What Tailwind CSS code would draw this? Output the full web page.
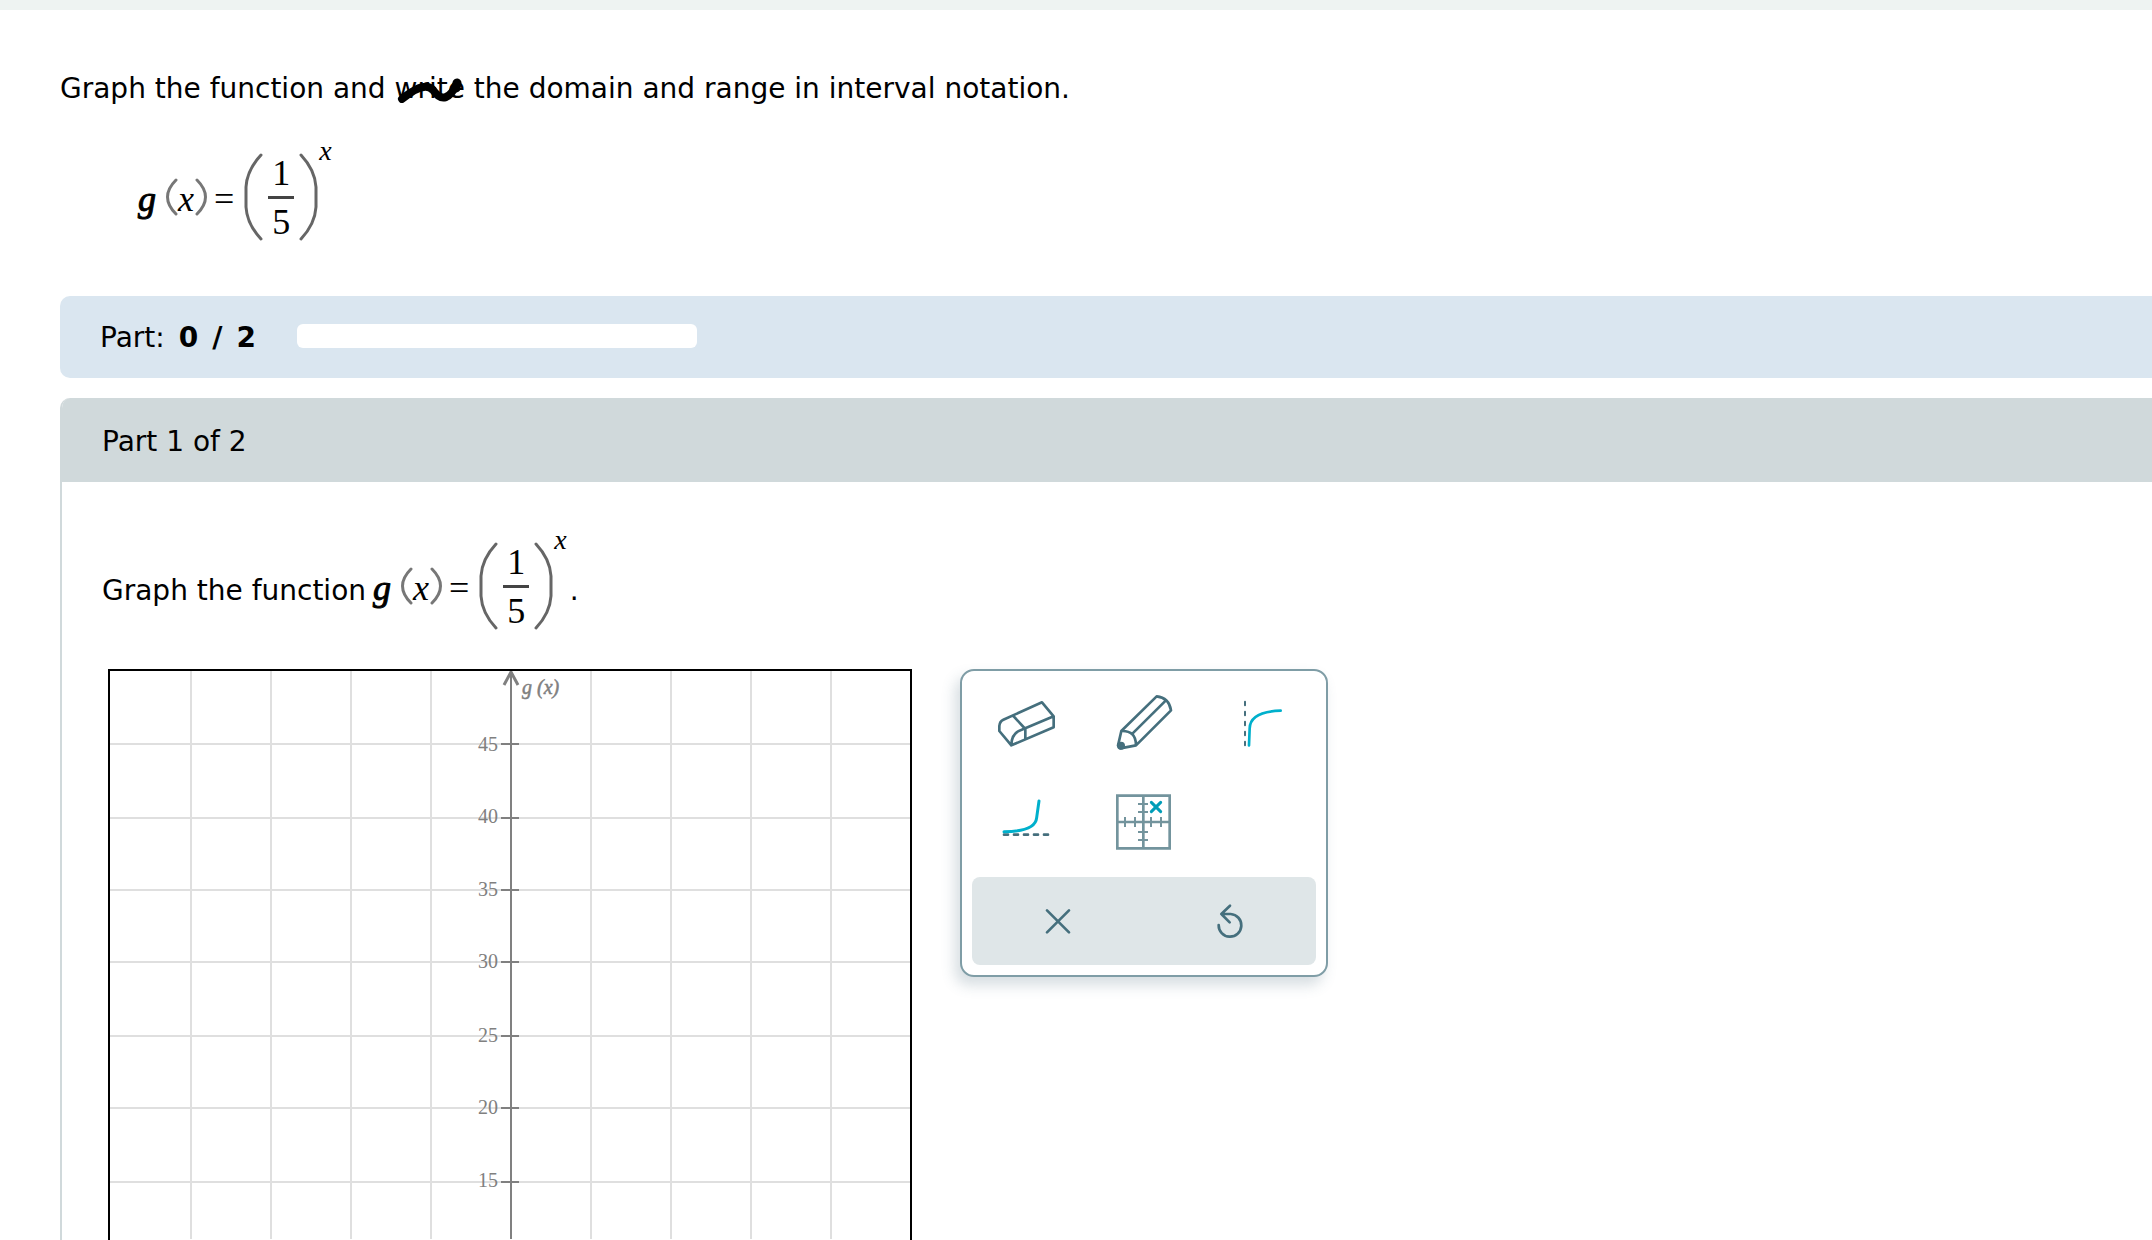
<!DOCTYPE html>
<html lang="en">
<head>
<meta charset="utf-8">
<title>Graph the function</title>
<script src="https://cdn.jsdelivr.net/npm/@tailwindcss/browser@4"></script>
</head>
<body class="bg-white text-black font-['Verdana','DejaVu_Sans',sans-serif] text-[28px] leading-9">
<div class="flex h-screen flex-col overflow-hidden">
  <header class="h-[10px] shrink-0 bg-[#eef3f2]"></header>
  <main class="flex min-h-0 flex-1 flex-col pl-[60px] pt-[61px]">
    <h1 class="font-normal">Graph the function and <span class="relative inline-block">write<svg class="absolute left-0 top-1 h-7 w-[68px]" viewBox="0 0 68 28" fill="none" stroke="#000" stroke-linecap="round" stroke-linejoin="round" aria-hidden="true"><path d="M7 24C18 15 31 7 38 15C47 28 55 23 62 9" stroke-width="8"/><path d="M61 13l1-5" stroke-width="9"/></svg></span> the domain and range in interval notation.</h1>

    <div class="mt-[29px] pl-[78px]">
      <div class="flex h-[122px] items-center font-['Liberation_Serif',serif] text-[36px] leading-10" role="math" aria-label="g of x equals one fifth to the power x">
        <i class="w-7 pt-1 [-webkit-text-stroke:1px]">g</i>
        <svg class="h-10 w-3" viewBox="0 0 12 40" fill="none" stroke="#777" stroke-width="3" stroke-linecap="round"><path d="M10 3Q-7 20 10 37"/></svg>
        <i class="pt-1">x</i>
        <svg class="ml-px h-10 w-3" viewBox="0 0 12 40" fill="none" stroke="#777" stroke-width="3" stroke-linecap="round"><path d="M2 3Q19 20 2 37"/></svg>
        <span class="ml-[7px] pt-1">=</span>
        <svg class="ml-[10px] h-[88px] w-5" viewBox="0 0 20 88" fill="none" stroke="#666" stroke-width="3" stroke-linecap="round"><path d="M17 2Q3 17 2 34V54Q3 71 17 86"/></svg>
        <span class="mx-1 flex flex-col items-center gap-[3px]"><span>1</span><span class="h-[3px] w-[26px] bg-[#444]"></span><span>5</span></span>
        <svg class="h-[88px] w-5" viewBox="0 0 20 88" fill="none" stroke="#666" stroke-width="3" stroke-linecap="round"><path d="M3 2Q17 17 18 34V54Q17 71 3 86"/></svg>
        <i class="ml-px mt-px self-start text-[28px] leading-7">x</i>
      </div>
    </div>

    <section class="mt-[38px] flex h-[82px] shrink-0 items-start rounded-l-[10px] bg-[#dae6f0] pl-10 pt-6">
      <p class="flex w-[197px] gap-[14px]">Part: <b class="flex gap-[14px]"><span>0</span> <span>/</span> <span>2</span></b></p>
      <div class="mt-1 h-6 w-[400px] rounded-md bg-white" role="progressbar" aria-valuenow="0" aria-valuemin="0" aria-valuemax="2" aria-label="Parts completed"></div>
    </section>

    <section class="mt-5 flex min-h-0 flex-1 flex-col overflow-hidden rounded-tl-[10px] border-l-2 border-[#d0d9db]">
      <h2 class="flex h-[84px] shrink-0 items-center bg-[#d0d9db] pl-10 pt-1 font-normal">Part 1 of 2</h2>

      <div class="mt-[43px] flex items-baseline pl-10">
        <p class="w-[271px]">Graph the function</p>
        <div class="flex h-[122px] items-center font-['Liberation_Serif',serif] text-[36px] leading-10" role="math" aria-label="g of x equals one fifth to the power x">
          <i class="w-7 pt-1 [-webkit-text-stroke:1px]">g</i>
          <svg class="h-10 w-3" viewBox="0 0 12 40" fill="none" stroke="#777" stroke-width="3" stroke-linecap="round"><path d="M10 3Q-7 20 10 37"/></svg>
          <i class="pt-1">x</i>
          <svg class="ml-px h-10 w-3" viewBox="0 0 12 40" fill="none" stroke="#777" stroke-width="3" stroke-linecap="round"><path d="M2 3Q19 20 2 37"/></svg>
          <span class="ml-[7px] pt-1">=</span>
          <svg class="ml-[10px] h-[88px] w-5" viewBox="0 0 20 88" fill="none" stroke="#666" stroke-width="3" stroke-linecap="round"><path d="M17 2Q3 17 2 34V54Q3 71 17 86"/></svg>
          <span class="mx-1 flex flex-col items-center gap-[3px]"><span>1</span><span class="h-[3px] w-[26px] bg-[#444]"></span><span>5</span></span>
          <svg class="h-[88px] w-5" viewBox="0 0 20 88" fill="none" stroke="#666" stroke-width="3" stroke-linecap="round"><path d="M3 2Q17 17 18 34V54Q17 71 3 86"/></svg>
          <i class="ml-px mt-px self-start text-[28px] leading-7">x</i>
        </div>
        <span class="ml-[3px]">.</span>
      </div>

      <div class="mt-[22px] flex min-h-0 flex-1 items-start gap-12 pl-[46px]">
        <div class="h-full w-[804px] shrink-0 overflow-hidden border-2 border-b-0 border-black">
          <svg class="block h-[568px] w-[800px] font-['Liberation_Serif',serif]" viewBox="110 672 800 568" role="img" aria-label="Coordinate grid">
            <path d="M191 672V1240M271 672V1240M351 672V1240M431 672V1240M591 672V1240M671 672V1240M751 672V1240M831 672V1240M110 745H910M110 819H910M110 891H910M110 963H910M110 1037H910M110 1109H910M110 1183H910" stroke="#dfdfdf" stroke-width="2"/>
            <path d="M511 672V1240M501 745H519M501 819H519M501 891H519M501 963H519M501 1037H519M501 1109H519M501 1183H519" stroke="#808080" stroke-width="2"/>
            <path d="M504 686L511 673L518 686" fill="none" stroke="#808080" stroke-width="3"/>
            <g fill="#808080" font-size="20" text-anchor="end">
              <text x="498" y="752">45</text><text x="498" y="824">40</text><text x="498" y="897">35</text><text x="498" y="969">30</text><text x="498" y="1043">25</text><text x="498" y="1115">20</text><text x="498" y="1188">15</text>
            </g>
            <text x="522" y="695" fill="#808080" font-size="20" font-style="italic" stroke="#808080" stroke-width=".5">g (x)</text>
          </svg>
        </div>

        <div class="w-[368px] shrink-0 rounded-[14px] border-2 border-[#7f9da6] bg-white px-[5px] pb-[10px] pt-[2px] shadow-[-5px_8px_14px_rgba(70,100,120,0.22)]">
          <div class="grid grid-cols-3">
            <button type="button" aria-label="Eraser"><svg class="h-[98px] w-[118px]" viewBox="81 72 354 294" fill="none" stroke="#456f7d" stroke-width="8" stroke-linejoin="round"><path d="M190 212L306 160L341 202V235L214 289L178 246V231Q179 217 190 212ZM219 200L256 240V271M341 202L245 242Q214 252 214 289"/></svg></button>
            <button type="button" aria-label="Pencil"><svg class="h-[98px] w-[118px]" viewBox="435 72 354 294" fill="none" stroke="#456f7d" stroke-width="8" stroke-linejoin="round"><path d="M650 142Q687 146 693 184L588 289L541 298L534 290L544 246ZM544 246Q588 244 588 289M578 253L677 155"/><circle cx="543" cy="290" r="10" fill="#456f7d" stroke-width="4"/></svg></button>
            <button type="button" aria-label="Vertical asymptote"><svg class="h-[98px] w-[118px]" viewBox="789 72 354 294" fill="none" stroke-linecap="round"><path d="M915 158V292" stroke="#456f7d" stroke-width="6" stroke-dasharray="11 19"/><path d="M927 289L929 238C930 203 966 187 1022 185" stroke="#00b0cc" stroke-width="8"/></svg></button>
            <button type="button" aria-label="Horizontal asymptote"><svg class="h-[98px] w-[118px]" viewBox="81 366 354 294" fill="none" stroke-linecap="round"><path d="M192 557H326" stroke="#456f7d" stroke-width="8" stroke-dasharray="12 18"/><path d="M192 548C247 548 287 538 290 506L297 456" stroke="#00b0cc" stroke-width="9"/></svg></button>
            <button type="button" aria-label="Plot a point by coordinates"><svg class="h-[98px] w-[118px]" viewBox="435 366 354 294" fill="none" stroke="#73949d"><path d="M532 440H689V598H532ZM610 440V598M532 519H689" stroke-width="8"/><path d="M594 465H624M594 489H624M594 549H624M594 573H624M555 504V534M585 504V534M633 504V534M663 504V534" stroke-width="6"/><path d="M634 460L662 488M662 460L634 488" stroke="#009db8" stroke-width="9" stroke-linecap="round"/></svg></button>
          </div>
          <div class="mx-[5px] mt-2 grid grid-cols-2 rounded-lg bg-[#dfe6e8]">
            <button type="button" aria-label="Clear"><svg class="h-[88px] w-[172px]" viewBox="96 684 516 264" fill="none" stroke="#456f7d" stroke-width="8" stroke-linecap="round"><path d="M321 784L387 850M387 784L321 850"/></svg></button>
            <button type="button" aria-label="Undo"><svg class="h-[88px] w-[172px]" viewBox="612 684 516 264" fill="none" stroke="#456f7d" stroke-width="8" stroke-linecap="round" stroke-linejoin="round"><path d="M870 770L844 795L869 820M844 795H872A34 34 0 1 1 836 828"/></svg></button>
          </div>
        </div>
      </div>
    </section>
  </main>
</div>
</body>
</html>
